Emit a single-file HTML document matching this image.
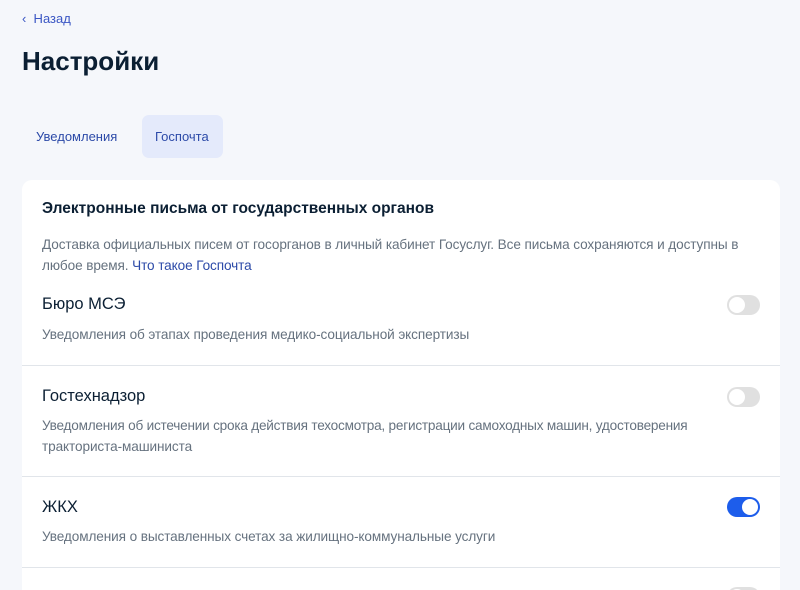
<!DOCTYPE html>
<html style="overflow:hidden;width:800px;height:590px"><head><meta charset="utf-8"><style>
*{margin:0;padding:0;box-sizing:border-box}
body{width:800px;height:590px;overflow:hidden;background:#f5f7fb;font-family:"Liberation Sans",sans-serif;position:relative;color:#0b1f33}
.a{position:absolute;white-space:nowrap}
.back{left:22px;top:11px;font-size:13px;color:#3a56c4}
h1{position:absolute;left:22px;top:46px;font-size:26px;font-weight:bold;color:#0b1f33}
.tab{font-size:13px;color:#2c4aa8}
.sel{position:absolute;left:142px;top:115px;width:81px;height:43px;background:#e4eafb;border-radius:7px}
.card{position:absolute;left:22px;top:180px;width:758px;height:410px;background:#fff;border-radius:10px 10px 0 0}
.hr{position:absolute;left:22px;width:758px;height:1px;background:#e1e5ea}
.t{font-size:16.5px;color:#0b1f33}
.d{font-size:13.6px;color:#66727f;letter-spacing:-0.1px}
.tg{position:absolute;left:727px;width:33px;height:20px;border-radius:10px;background:#e0e0e0}
.tg::after{content:"";position:absolute;left:2px;top:2px;width:16px;height:16px;border-radius:50%;background:#fff}
.on{background:#1d5deb}
.on::after{left:15px}
</style></head><body>
<div class="a back">‹&nbsp; Назад</div>
<h1>Настройки</h1>
<div class="sel"></div>
<div class="a tab" style="left:36px;top:129px">Уведомления</div>
<div class="a tab" style="left:155px;top:129px">Госпочта</div>
<div class="card"></div>
<div class="a" style="left:42px;top:200px;font-size:15.5px;font-weight:bold">Электронные письма от государственных органов</div>
<div class="a d" style="left:42px;top:237px">Доставка официальных писем от госорганов в личный кабинет Госуслуг. Все письма сохраняются и доступны в</div>
<div class="a d" style="left:42px;top:258px">любое время. <span style="color:#2c4aa8">Что такое Госпочта</span></div>
<div class="a t" style="left:42px;top:295px">Бюро МСЭ</div>
<div class="tg" style="top:295px"></div>
<div class="a d" style="left:42px;top:327px">Уведомления об этапах проведения медико-социальной экспертизы</div>
<div class="hr" style="top:365px"></div>
<div class="a t" style="left:42px;top:387px">Гостехнадзор</div>
<div class="tg" style="top:387px"></div>
<div class="a d" style="left:42px;top:418px;letter-spacing:-0.22px">Уведомления об истечении срока действия техосмотра, регистрации самоходных машин, удостоверения</div>
<div class="a d" style="left:42px;top:439px">тракториста-машиниста</div>
<div class="hr" style="top:476px"></div>
<div class="a t" style="left:42px;top:498px">ЖКХ</div>
<div class="tg on" style="top:497px"></div>
<div class="a d" style="left:42px;top:529px">Уведомления о выставленных счетах за жилищно-коммунальные услуги</div>
<div class="hr" style="top:567px"></div>
<div class="tg" style="top:587px"></div>
</body></html>
